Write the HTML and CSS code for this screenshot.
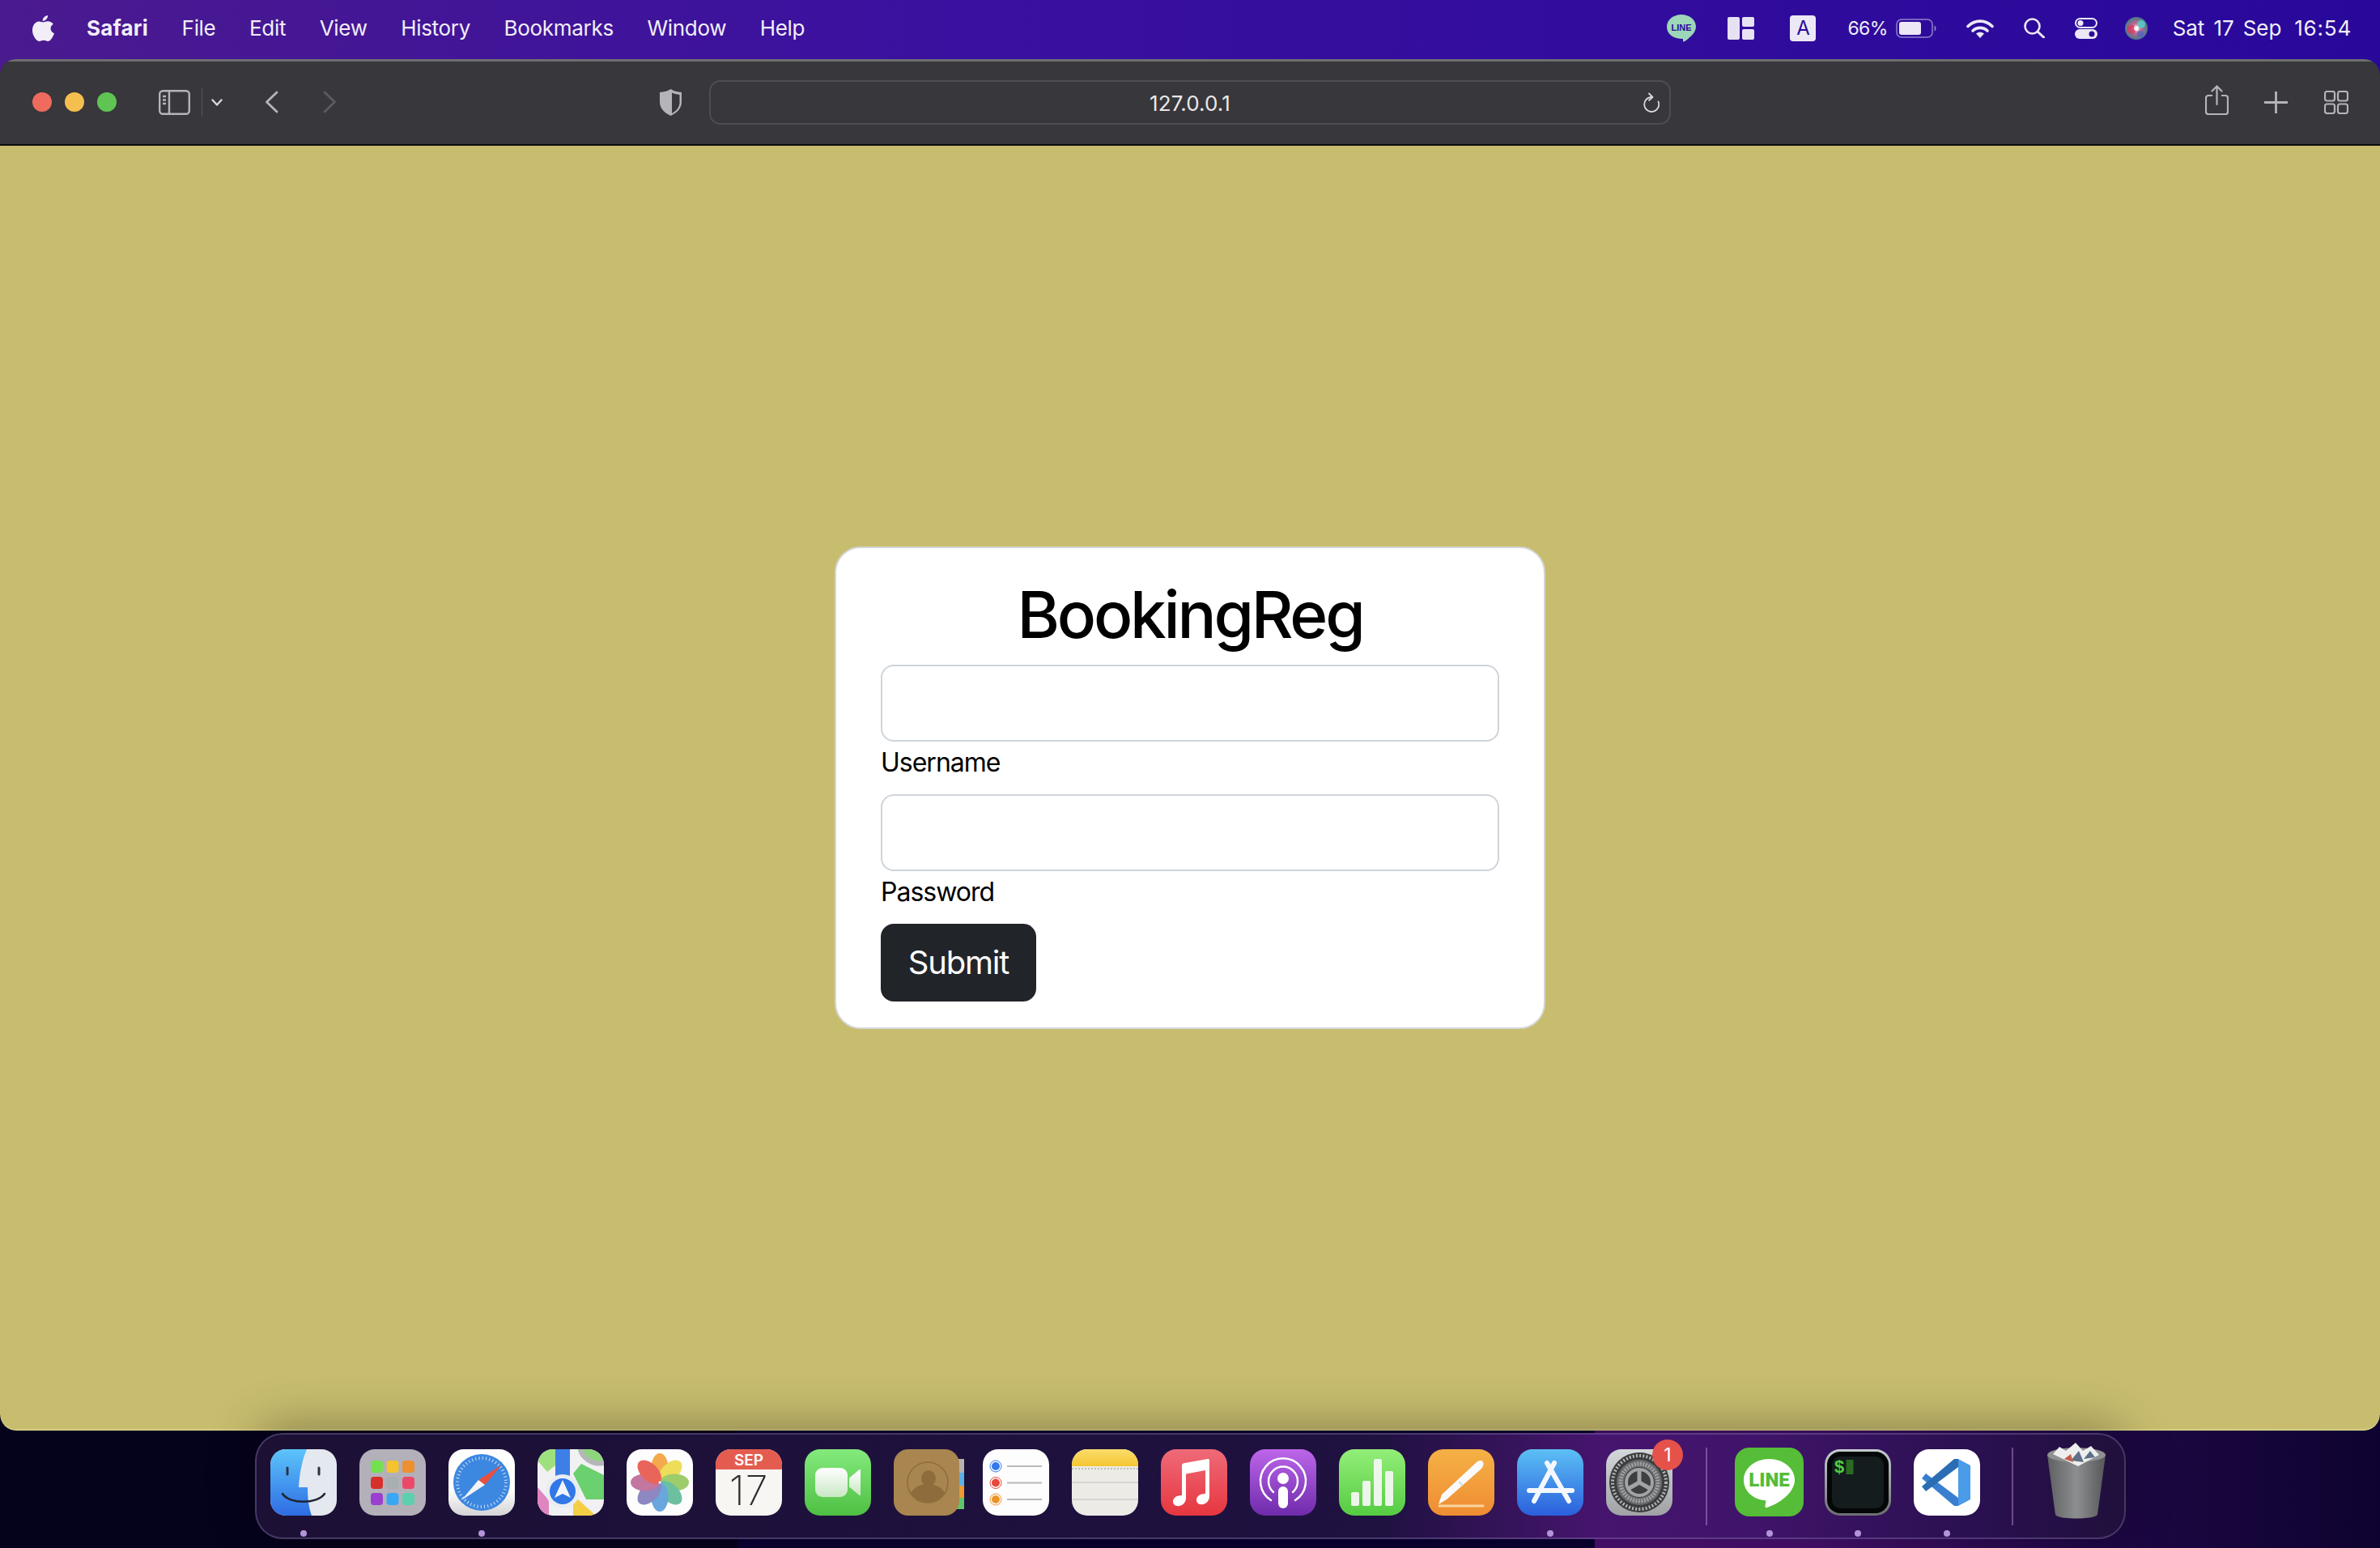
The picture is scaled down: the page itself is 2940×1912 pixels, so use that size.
FILE: index.html
```html
<!DOCTYPE html>
<html lang="en">
<head>
    <meta charset="UTF-8">
    <title>BookingReg</title>
    <link rel="stylesheet" href="styles.css">
</head>
<body>

    <header class="menubar">
        <div class="menu-left">
            <svg class="apple" viewBox="0 0 27 32"><path d="M19 0c.3 3.200-2.600 7-6.300 6.800C12.300 3.500 15.600.3 19 0zM13 8.500c1.600 0 3.300-1.300 6-1.300 2.700 0 5.300 1.300 6.800 3.600-4.800 2.800-4 9.400 1.200 11.400-1.300 3.600-4.500 9.800-7.900 9.800-1.900 0-2.800-1.200-5.100-1.200-2.400 0-3.400 1.200-5.200 1.200C4.800 32 0 24.800 0 18.500 0 12 4 7.600 8.300 7.600c2 0 3.600.9 4.700.9z" fill="#f1eef8"/></svg>
            <span class="menu-item app-name">Safari</span>
            <span class="menu-item">File</span>
            <span class="menu-item">Edit</span>
            <span class="menu-item">View</span>
            <span class="menu-item">History</span>
            <span class="menu-item">Bookmarks</span>
            <span class="menu-item">Window</span>
            <span class="menu-item">Help</span>
        </div>
        <div class="menu-right">
            <svg class="st-line" viewBox="0 0 36 34"><path d="M18 0c10 0 18 6.500 18 15 0 7-7 13-13 17.500-2 1.500-3 1.500-3-.5v-2C8 30 0 24 0 15 0 6.500 8 0 18 0z" fill="#9dd6b8"/><text x="18" y="19.500" class="st-line-text">LINE</text></svg>
            <svg class="st-layout" viewBox="0 0 33 28"><rect width="15" height="28" rx="2" fill="#e6e1f3"/><rect x="18" width="15" height="12" rx="2" fill="#e6e1f3"/><rect x="18" y="15" width="15" height="13" rx="2" fill="#e6e1f3"/></svg>
            <span class="st-input">A</span>
            <div class="st-battery">
                <span class="st-pct">66%</span>
                <svg class="battery" viewBox="0 0 50 24"><rect x="1" y="1" width="44" height="22" rx="6" fill="none" stroke="#8f82c9" stroke-width="1.500"/><rect x="4" y="4" width="27" height="16" rx="3" fill="#ece8f6"/><path d="M47.500 8.500c1.500.5 2 2 2 3.500s-.5 3-2 3.500z" fill="#8f82c9"/></svg>
            </div>
            <svg class="st-wifi" viewBox="0 0 34 24"><path d="M2 9.500C10.500 1 23.500 1 32 9.500" fill="none" stroke="#ece8f6" stroke-width="3.600" stroke-linecap="round"/><path d="M8 15c5-4.800 13-4.800 18 0" fill="none" stroke="#ece8f6" stroke-width="3.600" stroke-linecap="round"/><path d="M17 24l-5-5.500c3-2.300 7-2.300 10 0z" fill="#ece8f6"/></svg>
            <svg class="st-search" viewBox="0 0 26 25"><circle cx="10.500" cy="10.500" r="9" fill="none" stroke="#ece8f6" stroke-width="2.600"/><path d="M17 17l7.500 7" stroke="#ece8f6" stroke-width="3" stroke-linecap="round"/></svg>
            <svg class="st-control" viewBox="0 0 28 26"><rect x="1" y="1" width="26" height="11" rx="5.500" fill="none" stroke="#ece8f6" stroke-width="2"/><circle cx="7" cy="6.500" r="3.500" fill="#ece8f6"/><rect y="14" width="28" height="12" rx="6" fill="#ece8f6"/><circle cx="21" cy="20" r="3.500" fill="#2a0a98"/></svg>
            <svg class="st-siri" viewBox="0 0 28 28">
                <defs><radialGradient id="siriGlow" cx="50%" cy="50%" r="55%"><stop offset="0" stop-color="#f6eef4"/><stop offset=".4" stop-color="#c2668f"/><stop offset="1" stop-color="#2f7f88"/></radialGradient></defs>
                <circle cx="14" cy="14" r="14" fill="url(#siriGlow)"/>
                <circle cx="8" cy="15" r="5.500" fill="#d83a5f" opacity=".75"/><circle cx="20" cy="9" r="5" fill="#4fd6cf" opacity=".8"/><circle cx="19" cy="21" r="4" fill="#4a62c8" opacity=".7"/><circle cx="14" cy="14" r="3" fill="#fff" opacity=".85"/>
            </svg>
            <div class="st-clock"><span class="st-date">Sat 17 Sep</span><span class="st-time">16:54</span></div>
        </div>
    </header>

    <div class="window">
        <div class="toolbar">
            <div class="toolbar-left">
                <div class="lights">
                    <span class="light red"></span>
                    <span class="light yellow"></span>
                    <span class="light green"></span>
                </div>
                <svg class="tb-sidebar" viewBox="0 0 39 31"><rect x="1.200" y="1.200" width="36.600" height="28.600" rx="4" fill="none" stroke="#b5b4b8" stroke-width="2.400"/><path d="M13 1v29" stroke="#b5b4b8" stroke-width="2.400"/><path d="M5 8h4M5 12.500h4M5 17h4" stroke="#b5b4b8" stroke-width="2.400"/></svg>
                <span class="tb-divider"></span>
                <svg class="tb-chevron" viewBox="0 0 14 9"><path d="M1.500 1.500L7 7.500l5.500-6" fill="none" stroke="#d8d8da" stroke-width="2.400" stroke-linecap="round" stroke-linejoin="round"/></svg>
                <svg class="tb-back" viewBox="0 0 17 28"><path d="M15 2L2.500 14 15 26" fill="none" stroke="#b5b4b8" stroke-width="2.800" stroke-linecap="round" stroke-linejoin="round"/></svg>
                <svg class="tb-forward" viewBox="0 0 17 28"><path d="M2 2l12.500 12L2 26" fill="none" stroke="#5c5b60" stroke-width="2.800" stroke-linecap="round" stroke-linejoin="round"/></svg>
                <svg class="tb-shield" viewBox="0 0 27 33"><path d="M13.500 0c3 2.200 8 3.500 13.500 4v12c0 8-6 13.500-13.500 17C6 29.500 0 24 0 16V4c5.500-.5 10.500-1.800 13.500-4z" fill="#b5b4b8"/><path d="M15 4.500c2.500 1.300 5.500 2 9.500 2.500v9.500c0 6-4 10.500-9.500 13.500z" fill="#38373b"/></svg>
            </div>
            <div class="urlbar">
                <span class="url-text">127.0.0.1</span>
                <svg class="tb-reload" viewBox="0 0 20 25"><path d="M18.500 11.500A9 9 0 1 1 10 6" fill="none" stroke="#d8d8da" stroke-width="1.800" stroke-linecap="round"/><path d="M7 1.500L11.500 6 7 10" fill="none" stroke="#d8d8da" stroke-width="1.800" stroke-linecap="round" stroke-linejoin="round"/></svg>
            </div>
            <div class="toolbar-right">
                <svg class="tb-share" viewBox="0 0 29 37"><path d="M9 13H4a3 3 0 0 0-3 3v17a3 3 0 0 0 3 3h21a3 3 0 0 0 3-3V16a3 3 0 0 0-3-3h-5" fill="none" stroke="#b5b4b8" stroke-width="2.200"/><path d="M14.500 24V2M8.500 7.500l6-6 6 6" fill="none" stroke="#b5b4b8" stroke-width="2.200" stroke-linecap="round"/></svg>
                <svg class="tb-plus" viewBox="0 0 29 27"><path d="M14.500 0v27M0 13.500h29" stroke="#b5b4b8" stroke-width="2.800"/></svg>
                <svg class="tb-tabs" viewBox="0 0 30 29"><rect x="1" y="1" width="12" height="11.500" rx="2.500" fill="none" stroke="#b5b4b8" stroke-width="2.200"/><rect x="17" y="1" width="12" height="11.500" rx="2.500" fill="none" stroke="#b5b4b8" stroke-width="2.200"/><rect x="1" y="16.500" width="12" height="11.500" rx="2.500" fill="none" stroke="#b5b4b8" stroke-width="2.200"/><rect x="17" y="16.500" width="12" height="11.500" rx="2.500" fill="none" stroke="#b5b4b8" stroke-width="2.200"/></svg>
            </div>
        </div>

        <main class="content">
            <form class="card">
                <h1>BookingReg</h1>
                <div class="field">
                    <input type="text" id="username">
                    <label for="username">Username</label>
                </div>
                <div class="field">
                    <input type="password" id="password">
                    <label for="password">Password</label>
                </div>
                <button type="button">Submit</button>
            </form>
        </main>
    </div>

    <footer class="desk">
        <div class="dock">

            <div class="app">
                <svg viewBox="0 0 82 82">
                    <defs><linearGradient id="finderBlue" x1="0" y1="0" x2="0" y2="1"><stop offset="0" stop-color="#5cc4fb"/><stop offset="1" stop-color="#2e6ce3"/></linearGradient></defs>
                    <rect width="82" height="82" fill="#e4e8ef"/>
                    <path d="M0 0h45c-6 14-9 30-10 47h11c0 12 1 24 5 35H0z" fill="url(#finderBlue)"/>
                    <path d="M21 23v8M60 23v8" stroke="#2c3340" stroke-width="3" stroke-linecap="round"/>
                    <path d="M15 55c8 13 43 13 52 0" fill="none" stroke="#1f2530" stroke-width="2.500" stroke-linecap="round"/>
                </svg>
                <span class="dot"></span>
            </div>

            <div class="app">
                <svg viewBox="0 0 82 82">
                    <rect width="82" height="82" fill="#b3b0ba"/>
                    <rect x="14" y="14" width="15" height="15" rx="4" fill="#74e04f"/>
                    <rect x="33.500" y="14" width="15" height="15" rx="4" fill="#f6c22d"/>
                    <rect x="53" y="14" width="15" height="15" rx="4" fill="#ee9030"/>
                    <rect x="14" y="34" width="15" height="15" rx="4" fill="#d6302a"/>
                    <rect x="33.500" y="34" width="15" height="15" rx="4" fill="#a9aeb0"/>
                    <rect x="53" y="34" width="15" height="15" rx="4" fill="#ea4a68"/>
                    <rect x="14" y="54" width="15" height="15" rx="4" fill="#9a3fd0"/>
                    <rect x="33.500" y="54" width="15" height="15" rx="4" fill="#3aa7f5"/>
                    <rect x="53" y="54" width="15" height="15" rx="4" fill="#5cd0ae"/>
                </svg>
                <span class="dot off"></span>
            </div>

            <div class="app">
                <svg viewBox="0 0 82 82">
                    <defs><linearGradient id="safariBg" x1="0" y1="0" x2="0" y2="1"><stop offset=".6" stop-color="#ffffff"/><stop offset="1" stop-color="#d4d4d6"/></linearGradient></defs>
                    <rect width="82" height="82" fill="url(#safariBg)"/>
                    <circle cx="41" cy="41" r="35" fill="#3c87e0"/>
                    <circle cx="41" cy="41" r="30" fill="none" stroke="#cfe2f8" stroke-width="4" stroke-dasharray="1 3.300"/>
                    <path d="M66 19L37 38l8 6z" fill="#e8503f"/>
                    <path d="M16 63l21-25 8 6z" fill="#f4f4f4"/>
                </svg>
                <span class="dot"></span>
            </div>

            <div class="app">
                <svg viewBox="0 0 82 82">
                    <rect width="82" height="82" fill="#f1f1f3"/>
                    <path d="M0 0h22v20L12 28 0 14z" fill="#9ee07e"/>
                    <path d="M44 30l10-12 28 14v30L60 62z" fill="#6bd06e"/>
                    <path d="M50 0h32v18C68 20 52 14 50 0z" fill="#8ed57c"/>
                    <path d="M54 0c0 10 14 20 28 17" fill="none" stroke="#b5b6b8" stroke-width="6"/>
                    <rect x="22" y="0" width="18" height="34" fill="#3d7fe6"/>
                    <path d="M0 47l14 16v19H0z" fill="#df85c0"/>
                    <path d="M44 82V64l6-2 22 20z" fill="#f4cf44"/>
                    <circle cx="31" cy="52" r="21" fill="#e9edf2"/>
                    <circle cx="31" cy="52" r="16" fill="#3177e8"/>
                    <path d="M31 38l10 22-10-5-10 5z" fill="#f2f5fa"/>
                </svg>
                <span class="dot off"></span>
            </div>

            <div class="app">
                <svg viewBox="0 0 82 82">
                    <rect width="82" height="82" fill="#fdfdfd"/>
                    <g opacity=".85">
                        <ellipse cx="41" cy="23" rx="10.500" ry="18" fill="#f29a2e"/>
                        <ellipse cx="41" cy="23" rx="10.500" ry="18" fill="#ecd83c" transform="rotate(45 41 41)"/>
                        <ellipse cx="41" cy="23" rx="10.500" ry="18" fill="#8cc350" transform="rotate(90 41 41)"/>
                        <ellipse cx="41" cy="23" rx="10.500" ry="18" fill="#53b690" transform="rotate(135 41 41)"/>
                        <ellipse cx="41" cy="23" rx="10.500" ry="18" fill="#4f97d8" transform="rotate(180 41 41)"/>
                        <ellipse cx="41" cy="23" rx="10.500" ry="18" fill="#7a72b8" transform="rotate(225 41 41)"/>
                        <ellipse cx="41" cy="23" rx="10.500" ry="18" fill="#b85f90" transform="rotate(270 41 41)"/>
                        <ellipse cx="41" cy="23" rx="10.500" ry="18" fill="#e64a3c" transform="rotate(315 41 41)"/>
                    </g>
                    <circle cx="41" cy="41" r="1.500" fill="#fff"/>
                </svg>
                <span class="dot off"></span>
            </div>

            <div class="app">
                <svg viewBox="0 0 82 82">
                    <rect width="82" height="82" fill="#f7f6f3"/>
                    <rect width="82" height="25" fill="#e45c50"/>
                    <text x="41" y="20" class="cal-month">SEP</text>
                    <text x="41" y="69" class="cal-day">17</text>
                </svg>
                <span class="dot off"></span>
            </div>

            <div class="app">
                <svg viewBox="0 0 82 82">
                    <defs><linearGradient id="faceBg" x1="0" y1="0" x2="0" y2="1"><stop offset="0" stop-color="#83ea7c"/><stop offset="1" stop-color="#4fc043"/></linearGradient>
                    <linearGradient id="faceCam" x1="0" y1="0" x2="0" y2="1"><stop offset="0" stop-color="#ffffff"/><stop offset="1" stop-color="#c9e8c4"/></linearGradient></defs>
                    <rect width="82" height="82" fill="url(#faceBg)"/>
                    <rect x="13" y="23" width="40" height="36" rx="9" fill="url(#faceCam)"/>
                    <path d="M56 36l12-10v30l-12-10z" fill="url(#faceCam)" stroke="url(#faceCam)" stroke-width="2" stroke-linejoin="round"/>
                </svg>
                <span class="dot off"></span>
            </div>

            <div class="app">
                <svg class="wide" viewBox="0 0 87 82">
                    <rect x="70" y="12" width="17" height="17" fill="#b7b2ae"/>
                    <rect x="70" y="29" width="17" height="16" fill="#5ab0e8"/>
                    <rect x="70" y="45" width="17" height="15" fill="#ee9a34"/>
                    <rect x="70" y="60" width="17" height="14" fill="#5fc56a"/>
                    <rect width="81" height="82" rx="18" fill="#a98550"/>
                    <circle cx="42" cy="41" r="25" fill="none" stroke="#8e6c3c" stroke-width="1.500"/>
                    <ellipse cx="43" cy="36" rx="9" ry="10" fill="#8e6c3c"/>
                    <path d="M21 54c6-9 14-11 21-11s16 2 21 11c-6 8-13 12-21 12s-15-4-21-12z" fill="#8e6c3c"/>
                </svg>
                <span class="dot off"></span>
            </div>

            <div class="app">
                <svg viewBox="0 0 82 82">
                    <rect width="82" height="82" fill="#fdfdfd"/>
                    <circle cx="16" cy="21" r="6" fill="#3478f0" stroke="#fdfdfd" stroke-width="2"/><circle cx="16" cy="21" r="7" fill="none" stroke="#3478f0"/>
                    <circle cx="16" cy="41.500" r="6" fill="#e8483c" stroke="#fdfdfd" stroke-width="2"/><circle cx="16" cy="41.500" r="7" fill="none" stroke="#e8483c"/>
                    <circle cx="16" cy="62" r="6" fill="#ec9326" stroke="#fdfdfd" stroke-width="2"/><circle cx="16" cy="62" r="7" fill="none" stroke="#ec9326"/>
                    <path d="M30 21h43M30 41.500h43M30 62h43" stroke="#b9b9bb" stroke-width="2"/>
                </svg>
                <span class="dot off"></span>
            </div>

            <div class="app">
                <svg viewBox="0 0 82 82">
                    <defs><linearGradient id="notesTop" x1="0" y1="0" x2="0" y2="1"><stop offset="0" stop-color="#fadc6c"/><stop offset="1" stop-color="#f6c532"/></linearGradient></defs>
                    <rect width="82" height="82" fill="#ecebe6"/>
                    <rect width="82" height="21" fill="url(#notesTop)"/>
                    <path d="M0 24h82" stroke="#bdbcb8" stroke-width="2" stroke-dasharray="2 2"/>
                    <path d="M0 41h82M0 62h82" stroke="#d6d5d1" stroke-width="2"/>
                </svg>
                <span class="dot off"></span>
            </div>

            <div class="app">
                <svg viewBox="0 0 82 82">
                    <defs><linearGradient id="musicBg" x1="0" y1="0" x2="0" y2="1"><stop offset="0" stop-color="#ef6a78"/><stop offset="1" stop-color="#e6363f"/></linearGradient></defs>
                    <rect width="82" height="82" fill="url(#musicBg)"/>
                    <path d="M60 13v45c0 5-3 9-8 10-5 1-8-2-8-5.500s3-6.500 7-7l4-.8V26l-24 4.500V60c0 5-3 9-8 10-5 1-8-2-8-5.500s3-6.500 7-7l4-.8V20c0-1.500 1-2.500 2.500-2.800l29-5.200c1.500-.2 2.500.5 2.500 1z" fill="#ffffff"/>
                </svg>
                <span class="dot off"></span>
            </div>

            <div class="app">
                <svg viewBox="0 0 82 82">
                    <defs><linearGradient id="podBg" x1="0" y1="0" x2="0" y2="1"><stop offset="0" stop-color="#bd66ea"/><stop offset="1" stop-color="#6e2bab"/></linearGradient></defs>
                    <rect width="82" height="82" fill="url(#podBg)"/>
                    <path d="M26 63a28 28 0 1 1 30 0" fill="none" stroke="#fff" stroke-width="2.500" stroke-linecap="round"/>
                    <path d="M29 53a18 18 0 1 1 24 0" fill="none" stroke="#fff" stroke-width="2.500" stroke-linecap="round"/>
                    <circle cx="41" cy="36" r="7" fill="#fff"/>
                    <rect x="35" y="46" width="12" height="27" rx="6" fill="#fff"/>
                </svg>
                <span class="dot off"></span>
            </div>

            <div class="app">
                <svg viewBox="0 0 82 82">
                    <defs><linearGradient id="numBg" x1="0" y1="0" x2="0" y2="1"><stop offset="0" stop-color="#93ee78"/><stop offset="1" stop-color="#55cc42"/></linearGradient></defs>
                    <rect width="82" height="82" fill="url(#numBg)"/>
                    <rect x="15" y="53" width="10" height="17" rx="2" fill="#edf6ea"/>
                    <rect x="29" y="39" width="10" height="31" rx="2" fill="#edf6ea"/>
                    <rect x="43" y="12" width="10" height="58" rx="2" fill="#edf6ea"/>
                    <rect x="57" y="27" width="10" height="43" rx="2" fill="#edf6ea"/>
                </svg>
                <span class="dot off"></span>
            </div>

            <div class="app">
                <svg viewBox="0 0 82 82">
                    <defs><linearGradient id="pagesBg" x1="0" y1="0" x2="0" y2="1"><stop offset="0" stop-color="#f5b145"/><stop offset="1" stop-color="#ef8c33"/></linearGradient></defs>
                    <rect width="82" height="82" fill="url(#pagesBg)"/>
                    <path d="M13 68l4-12 43-40c2-2 7-3 8 0 1.500 3-.5 6-2 8L23 62z" fill="#fafafa"/>
                    <path d="M38 40l5 5" stroke="#d8d8d8" stroke-width="2"/>
                    <path d="M14 70h54" stroke="#f7d3a0" stroke-width="3" stroke-linecap="round"/>
                </svg>
                <span class="dot off"></span>
            </div>

            <div class="app">
                <svg viewBox="0 0 82 82">
                    <defs><linearGradient id="storeBg" x1="0" y1="0" x2="0" y2="1"><stop offset="0" stop-color="#5cc0f5"/><stop offset="1" stop-color="#2a5fdc"/></linearGradient></defs>
                    <rect width="82" height="82" fill="url(#storeBg)"/>
                    <g fill="none" stroke="#f4f8fe" stroke-linecap="round">
                        <path d="M37 17l27 47" stroke-width="6"/>
                        <path d="M46 17L21 64" stroke-width="6"/>
                        <path d="M15 51h53" stroke-width="6"/>
                    </g>
                </svg>
                <span class="dot"></span>
            </div>

            <div class="app has-badge">
                <svg viewBox="0 0 82 82">
                    <defs><linearGradient id="gearBg" x1="0" y1="0" x2="0" y2="1"><stop offset="0" stop-color="#d4d8da"/><stop offset="1" stop-color="#a0a2a4"/></linearGradient></defs>
                    <rect width="82" height="82" fill="url(#gearBg)"/>
                    <circle cx="41" cy="41" r="37" fill="#3c3d3f"/>
                    <circle cx="41" cy="41" r="33" fill="none" stroke="#b4b5b7" stroke-width="4" stroke-dasharray="2 2.200"/>
                    <circle cx="41" cy="41" r="28" fill="#6a6b6d"/>
                    <circle cx="41" cy="41" r="23" fill="none" stroke="#a2a3a5" stroke-width="5" stroke-dasharray="2 1.500"/>
                    <circle cx="41" cy="41" r="19" fill="#3e3f41"/>
                    <circle cx="41" cy="41" r="16" fill="none" stroke="#a2a3a5" stroke-width="4"/>
                    <path d="M41 41V25M41 41L27 49M41 41l14 8" stroke="#a2a3a5" stroke-width="5"/>
                </svg>
                <span class="badge">1</span>
                <span class="dot off"></span>
            </div>

            <span class="dock-sep"></span>

            <div class="app line-app">
                <svg viewBox="0 0 85 85">
                    <rect width="85" height="85" rx="18" fill="#55bd37"/>
                    <path d="M42.500 14c17.500 0 31.500 11.500 31.500 26 0 13-14 27-34 34-1.500.5-3 0-2.500-2.500l1-6C22 64 11 53.500 11 40c0-14.500 14-26 31.500-26z" fill="#fff"/>
                    <text x="42.500" y="48" class="line-text">LINE</text>
                </svg>
                <span class="dot"></span>
            </div>

            <div class="app">
                <svg viewBox="0 0 82 82">
                    <defs><linearGradient id="termEdge" x1="0" y1="0" x2="0" y2="1"><stop offset="0" stop-color="#c5cdd0"/><stop offset="1" stop-color="#6d6f70"/></linearGradient></defs>
                    <rect width="82" height="82" fill="url(#termEdge)"/>
                    <rect x="3" y="3" width="76" height="76" rx="16" fill="#050607"/>
                    <rect x="9" y="9" width="64" height="64" rx="10" fill="#141c1d"/>
                    <text x="18" y="29" class="term-text">$</text>
                    <rect x="26.500" y="13" width="9" height="18" fill="#2a6a22"/>
                </svg>
                <span class="dot"></span>
            </div>

            <div class="app">
                <svg viewBox="0 0 82 82">
                    <rect width="82" height="82" fill="#ffffff"/>
                    <polygon points="10,36 15,30 55,60 55,70 50,70" fill="#3a7fcf"/>
                    <polygon points="10,46 15,52 55,22 55,12 50,12" fill="#2a6db3"/>
                    <polygon points="55,12 70,20 70,62 55,70" fill="#4a9be8"/>
                </svg>
                <span class="dot"></span>
            </div>

            <span class="dock-sep last"></span>

            <div class="app trash">
                <svg viewBox="0 0 74 94">
                    <defs><linearGradient id="trashBody" x1="0" y1="0" x2="1" y2="0"><stop offset="0" stop-color="#5e5f61"/><stop offset=".5" stop-color="#8d8e90"/><stop offset="1" stop-color="#565759"/></linearGradient></defs>
                    <path d="M1 15l10 74c4 6 48 6 52 0l10-74z" fill="url(#trashBody)"/>
                    <ellipse cx="37" cy="15" rx="36" ry="9" fill="#8f9092"/>
                    <path d="M8 14L16 5l8 5 12-10 9 10 10-6 10 11-26 14z" fill="#eeeeee"/>
                    <path d="M30 22l10-12 6 14zM46 20l8-10 6 8z" fill="#5f6f88"/>
                    <path d="M22 20l8-6 3 10z" fill="#c65b4a"/>
                </svg>
                <span class="dot off"></span>
            </div>

        </div>
    </footer>

</body>
</html>
```
FILE: styles.css
```css
* {
    box-sizing: border-box;
}

html, body {
    height: 100%;
}

body {
    margin: 0;
    height: 1912px;
    display: flex;
    flex-direction: column;
    overflow: hidden;
    font-family: 'Inter', 'Liberation Sans', sans-serif;
    background:
        linear-gradient(90deg, #4a1a8f 0%, #3a10a0 40%, #28089a 100%) top / 100% 200px no-repeat,
        linear-gradient(90deg, #05021c 0%, #0e0330 100%);
}

svg {
    display: block;
    flex-shrink: 0;
}

/* menu bar */

.menubar {
    height: 73px;
    flex-shrink: 0;
    display: flex;
    align-items: center;
    justify-content: space-between;
    padding: 0 35px 4px 40px;
    color: #f1eef8;
    font-size: 26px;
    letter-spacing: -0.3px;
}

.menu-left {
    display: flex;
    align-items: center;
}

.apple {
    width: 27px;
    height: 32px;
    margin-right: 40px;
}

.menu-item {
    margin-right: 41.5px;
}

.app-name {
    font-weight: 700;
    letter-spacing: 0.2px;
}

.menu-right {
    display: flex;
    align-items: center;
    gap: 37px;
}

.st-line {
    width: 36px;
    height: 34px;
    margin-right: 2px;
}

.st-line-text {
    font-family: 'Liberation Sans', sans-serif;
    font-size: 11px;
    font-weight: 700;
    fill: #2a0a98;
    text-anchor: middle;
    letter-spacing: 0;
}

.st-layout {
    width: 33px;
    height: 28px;
    margin-right: 7px;
}

.st-input {
    width: 32px;
    height: 32px;
    margin-right: 2px;
    border-radius: 4px;
    background: #ece8f6;
    color: #2a0a98;
    font-size: 24px;
    display: flex;
    align-items: center;
    justify-content: center;
}

.st-battery {
    display: flex;
    align-items: center;
    gap: 10px;
}

.st-pct {
    font-size: 23px;
    letter-spacing: -0.6px;
}

.battery {
    width: 50px;
    height: 24px;
}

.st-wifi {
    width: 34px;
    height: 24px;
}

.st-search {
    width: 26px;
    height: 25px;
}

.st-control {
    width: 28px;
    height: 26px;
}

.st-siri {
    width: 28px;
    height: 28px;
    margin-left: -3px;
}

.st-clock {
    display: flex;
    gap: 16px;
    margin-left: -6px;
}

.st-date {
    word-spacing: 4px;
    letter-spacing: -0.1px;
}

.st-time {
    letter-spacing: 0.8px;
}

/* browser window */

.window {
    height: 1694px;
    flex-shrink: 0;
    display: flex;
    flex-direction: column;
    border-radius: 20px;
    overflow: hidden;
}

.toolbar {
    height: 107px;
    flex-shrink: 0;
    display: flex;
    align-items: center;
    padding-bottom: 2px;
    background: #38373b;
    border-top: 3px solid #6e6e71;
    border-bottom: 2px solid #0c0c0d;
}

.toolbar-left {
    width: 876px;
    flex-shrink: 0;
    display: flex;
    align-items: center;
    padding-left: 40px;
}

.lights {
    display: flex;
    gap: 16px;
    margin-right: 52px;
}

.light {
    width: 24px;
    height: 24px;
    border-radius: 50%;
}

.red {
    background: #ef6b5e;
}

.yellow {
    background: #f5bf4f;
}

.green {
    background: #5fc454;
}

.tb-sidebar {
    width: 39px;
    height: 31px;
}

.tb-divider {
    width: 1px;
    height: 36px;
    margin: 0 11px 0 14px;
    background: #55545a;
}

.tb-chevron {
    width: 14px;
    height: 9px;
}

.tb-back {
    width: 17px;
    height: 28px;
    margin-left: 52px;
}

.tb-forward {
    width: 17px;
    height: 28px;
    margin-left: 55px;
}

.tb-shield {
    width: 27px;
    height: 33px;
    margin-left: auto;
    margin-right: 34px;
}

.urlbar {
    width: 1188px;
    height: 55px;
    flex-shrink: 0;
    position: relative;
    display: flex;
    align-items: center;
    justify-content: center;
    border: 2px solid #4e4d52;
    border-radius: 14px;
    color: #e8e8ea;
    font-size: 26px;
}

.url-text {
    padding-top: 2px;
    letter-spacing: 0.1px;
}

.tb-reload {
    position: absolute;
    right: 12px;
    top: 13px;
    width: 20px;
    height: 25px;
}

.toolbar-right {
    flex: 1;
    display: flex;
    align-items: center;
    justify-content: flex-end;
    padding-right: 39px;
}

.tb-share {
    width: 29px;
    height: 37px;
    margin-bottom: 6px;
}

.tb-plus {
    width: 29px;
    height: 27px;
    margin: 0 45px 0 44px;
}

.tb-tabs {
    width: 30px;
    height: 29px;
}

/* the page itself */

.content {
    flex: 1;
    display: flex;
    align-items: center;
    justify-content: center;
    background: #c8bd6e;
    border-bottom: 2px solid #d4cb84;
    border-radius: 0 0 20px 20px;
}

.card {
    width: 878px;
    padding: 32px 55px;
    background: #fff;
    border: 2px solid #d4d5d6;
    border-radius: 32px;
}

h1 {
    margin: 0 0 16px;
    padding-top: 2px;
    height: 96px;
    font-size: 80px;
    font-weight: 500;
    line-height: 96px;
    text-align: center;
    color: #000;
    letter-spacing: -3.2px;
}

.field {
    margin-bottom: 15px;
}

input {
    display: block;
    width: 100%;
    height: 95px;
    padding: 0 24px;
    border: 2px solid #ced4da;
    border-radius: 16px;
    background: #fff;
    outline: none;
}

label {
    display: block;
    padding-top: 2px;
    font-size: 32px;
    line-height: 48px;
    color: #000;
    letter-spacing: -1px;
}

button {
    display: block;
    width: 192px;
    height: 96px;
    padding: 0 0 1px;
    border: none;
    border-radius: 16px;
    background: #212529;
    color: #fff;
    font-family: inherit;
    font-size: 40px;
    letter-spacing: -1.2px;
}

/* dock */

.desk {
    flex: 1;
    display: flex;
    justify-content: center;
    background: linear-gradient(90deg, #05021c 0%, #05021c 31%, #0a0232 31%, #0a0232 67%, #4a1070 67%, #45106c 76%, #1e0845 88%, #0e0330 100%);
}

.dock {
    position: relative;
    width: 2311px;
    height: 131px;
    margin-top: 3px;
    display: flex;
    padding: 18px 17.5px 0;
    gap: 28px;
    border: 2px solid rgba(150, 130, 190, 0.35);
    border-radius: 34px;
    background: linear-gradient(90deg, #1c1035 0%, #1f1140 60%, #46156e 72%, #40146a 80%, #2a1050 92%, #20103c 100%);
    box-shadow: 0 -10px 60px rgba(0, 0, 0, 0.3);
}

.app {
    position: relative;
    width: 82px;
    display: flex;
    flex-direction: column;
    align-items: center;
    flex-shrink: 0;
}

.app svg {
    width: 82px;
    height: 82px;
    border-radius: 19px;
}

.app .wide {
    width: 87px;
    margin-right: -5px;
    border-radius: 0;
    align-self: flex-start;
}

.line-app {
    width: 85px;
    margin-right: -2px;
}

.line-app svg {
    width: 85px;
    height: 85px;
    margin-top: -2px;
    margin-bottom: -1px;
    border-radius: 0;
}

.trash {
    width: 74px;
}

.trash svg {
    width: 74px;
    height: 94px;
    margin-top: -8px;
    border-radius: 0;
}

.dot {
    width: 8px;
    height: 8px;
    margin-top: 18px;
    border-radius: 50%;
    background: #b394d8;
}

.off {
    visibility: hidden;
}

.badge {
    position: absolute;
    top: -12px;
    right: -13px;
    width: 38px;
    height: 38px;
    border-radius: 50%;
    background: #e5524a;
    color: #fff;
    font-size: 23px;
    display: flex;
    align-items: center;
    justify-content: center;
}

.dock-sep {
    width: 2px;
    height: 96px;
    margin: -2px 6px 0 13px;
    background: rgba(190, 150, 220, 0.45);
    flex-shrink: 0;
}

.dock-sep.last {
    margin: -2px 13px 0 11px;
}

.cal-month {
    font-family: 'Inter', sans-serif;
    font-size: 19px;
    font-weight: 600;
    fill: #fff;
    text-anchor: middle;
}

.cal-day {
    font-family: 'Inter', sans-serif;
    font-size: 50px;
    font-weight: 200;
    fill: #2b2b2d;
    text-anchor: middle;
    letter-spacing: 1px;
}

.line-text {
    font-family: 'Roboto', sans-serif;
    font-size: 24px;
    font-weight: 900;
    fill: #55bd37;
    text-anchor: middle;
}

.term-text {
    font-family: 'Liberation Sans', sans-serif;
    font-size: 22px;
    font-weight: 700;
    fill: #4fd13f;
    text-anchor: middle;
}
```
